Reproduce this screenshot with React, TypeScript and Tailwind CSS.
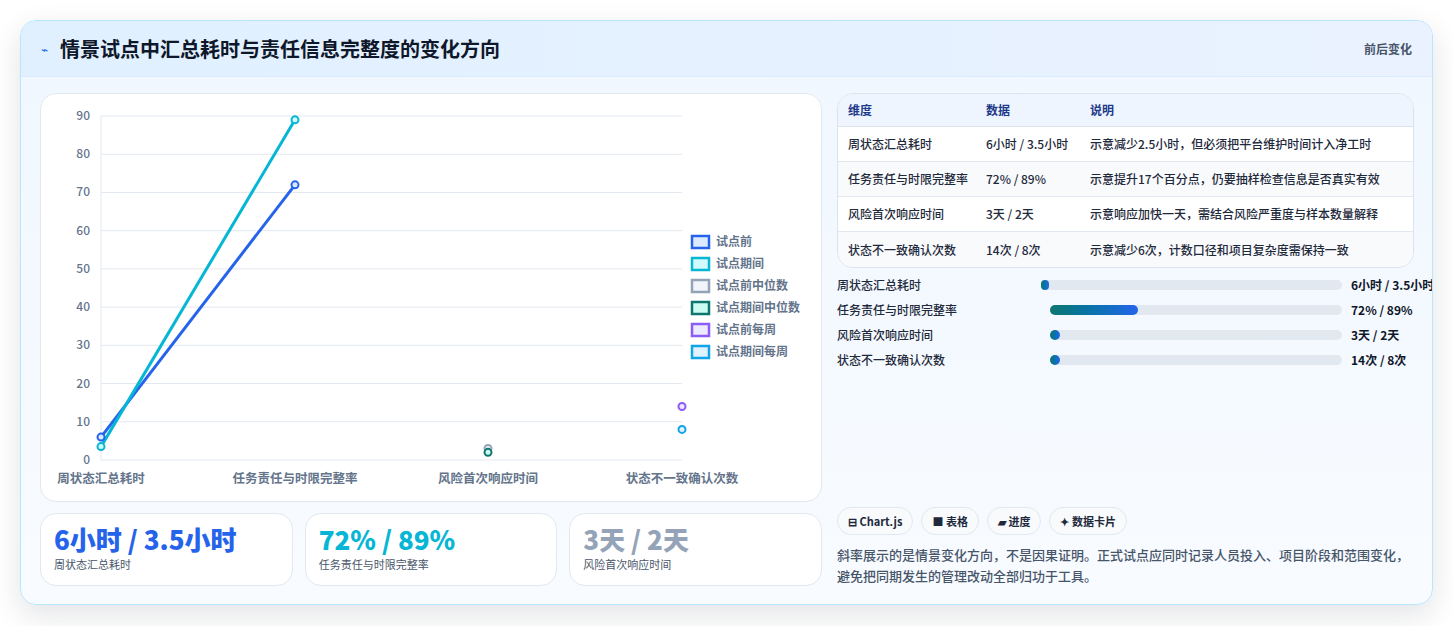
import React from "react";

const font = { fontFamily: '"Noto Sans CJK SC", "Noto Sans", sans-serif' };

const yTicks = [0, 10, 20, 30, 40, 50, 60, 70, 80, 90];
const yOf = (v: number) => 366 - v * 3.822;
const xs = [60, 254, 447, 641];
const cats = ["周状态汇总耗时", "任务责任与时限完整率", "风险首次响应时间", "状态不一致确认次数"];

const legend = [
  { label: "试点前", stroke: "#2563eb", fill: "#dbeafe" },
  { label: "试点期间", stroke: "#06b6d4", fill: "#cffafe" },
  { label: "试点前中位数", stroke: "#94a3b8", fill: "#f1f5f9" },
  { label: "试点期间中位数", stroke: "#0f766e", fill: "#ccfbf1" },
  { label: "试点前每周", stroke: "#8b5cf6", fill: "#ede9fe" },
  { label: "试点期间每周", stroke: "#0ea5e9", fill: "#e0f2fe" },
];

function Chart() {
  return (
    <svg width="781" height="408" viewBox="0 0 781 408" className="block">
      {yTicks.map((t) => (
        <g key={t}>
          <line x1={60} x2={641} y1={yOf(t)} y2={yOf(t)} stroke="#e2e8f0" strokeWidth={1} />
          <text x={49} y={yOf(t) + 4} textAnchor="end" fontSize={12} fill="#64748b" fontWeight={500} style={font}>{t}</text>
        </g>
      ))}
      <line x1={60} x2={60} y1={yOf(90)} y2={366} stroke="#e2e8f0" />
      {cats.map((c, i) => (
        <text key={c} x={xs[i]} y={389} textAnchor="middle" fontSize={12.5} fill="#64748b" fontWeight={600} style={font}>{c}</text>
      ))}
      <line x1={60} y1={yOf(6)} x2={254} y2={yOf(72)} stroke="#2563eb" strokeWidth={3} />
      <line x1={60} y1={yOf(3.5)} x2={254} y2={yOf(89)} stroke="#06b6d4" strokeWidth={3} />
      <circle cx={60} cy={yOf(6)} r={3.5} fill="#dbeafe" stroke="#2563eb" strokeWidth={2} />
      <circle cx={254} cy={yOf(72)} r={3.5} fill="#dbeafe" stroke="#2563eb" strokeWidth={2} />
      <circle cx={60} cy={yOf(3.5)} r={3.5} fill="#cffafe" stroke="#06b6d4" strokeWidth={2} />
      <circle cx={254} cy={yOf(89)} r={3.5} fill="#cffafe" stroke="#06b6d4" strokeWidth={2} />
      <circle cx={447} cy={yOf(3)} r={3.5} fill="#f1f5f9" stroke="#94a3b8" strokeWidth={2} />
      <circle cx={447} cy={yOf(2)} r={3.5} fill="#ccfbf1" stroke="#0f766e" strokeWidth={2} />
      <circle cx={641} cy={yOf(14)} r={3.5} fill="#ede9fe" stroke="#8b5cf6" strokeWidth={2} />
      <circle cx={641} cy={yOf(8)} r={3.5} fill="#e0f2fe" stroke="#0ea5e9" strokeWidth={2} />
      {legend.map((l, i) => (
        <g key={l.label}>
          <rect x={651} y={142 + i * 22} width={17} height={12} fill={l.fill} stroke={l.stroke} strokeWidth={2.5} />
          <text x={675} y={152 + i * 22} fontSize={12} fill="#64748b" fontWeight={600} style={font}>{l.label}</text>
        </g>
      ))}
    </svg>
  );
}

const rows = [
  ["周状态汇总耗时", "6小时 / 3.5小时", "示意减少2.5小时，但必须把平台维护时间计入净工时"],
  ["任务责任与时限完整率", "72% / 89%", "示意提升17个百分点，仍要抽样检查信息是否真实有效"],
  ["风险首次响应时间", "3天 / 2天", "示意响应加快一天，需结合风险严重度与样本数量解释"],
  ["状态不一致确认次数", "14次 / 8次", "示意减少6次，计数口径和项目复杂度需保持一致"],
];

const bars = [
  { label: "周状态汇总耗时", value: "6小时 / 3.5小时", w: "w-[204px]", pct: "w-[8px]" },
  { label: "任务责任与时限完整率", value: "72% / 89%", w: "w-[213px]", pct: "w-[30%]" },
  { label: "风险首次响应时间", value: "3天 / 2天", w: "w-[213px]", pct: "w-[10px]" },
  { label: "状态不一致确认次数", value: "14次 / 8次", w: "w-[213px]", pct: "w-[10px]" },
];

const stats = [
  { value: "6小时 / 3.5小时", label: "周状态汇总耗时", color: "text-[#2563eb]" },
  { value: "72% / 89%", label: "任务责任与时限完整率", color: "text-[#06b6d4]" },
  { value: "3天 / 2天", label: "风险首次响应时间", color: "text-[#94a3b8]" },
];

const chips = ["⊟ Chart.js", "■ 表格", "▰ 进度", "✦ 数据卡片"];

export default function App() {
  return (
    <div className="min-h-screen bg-white p-5" style={font}>
      <div className="rounded-2xl border border-[#bae6fd] bg-gradient-to-b from-[#f0f7ff] to-[#f8fbff] shadow-[0_10px_30px_rgba(15,23,42,0.12)] overflow-hidden">
        <div className="flex h-[56px] items-center justify-between border-b border-[#dbeafe] bg-gradient-to-r from-[#e0f0ff] to-[#eaf2ff] pl-5 pr-5">
          <div className="flex items-center gap-3">
            <span className="text-[12px] text-[#2563eb]">⌁</span>
            <h1 className="text-[20px] font-bold text-[#0f172a]">情景试点中汇总耗时与责任信息完整度的变化方向</h1>
          </div>
          <span className="text-[12px] font-bold text-[#475569]">前后变化</span>
        </div>
        <div className="flex gap-[15px] pl-[19px] pr-[18px] pt-4 pb-[18px]">
          <div className="w-[782px] flex-none">
            <div className="h-[409px] rounded-2xl border border-[#e2e8f0] bg-white">
              <Chart />
            </div>
            <div className="mt-[11px] grid grid-cols-3 gap-3">
              {stats.map((s) => (
                <div key={s.label} className="h-[73px] rounded-2xl border border-[#e2e8f0] bg-white px-[13px] pt-[9px]">
                  <div className={`text-[26px] font-extrabold leading-[32px] ${s.color}`}>{s.value}</div>
                  <div className="mt-[1px] text-[11px] text-[#475569]">{s.label}</div>
                </div>
              ))}
            </div>
          </div>
          <div className="flex-1 min-w-0 flex flex-col">
            <div className="overflow-hidden rounded-2xl border border-[#dbe3ee] bg-white/70 text-[12px]">
              <div className="grid grid-cols-[138px_104px_1fr] h-[33px] items-center border-b border-[#dbe3ee] bg-[#eef5ff] px-[10px] font-bold text-[#1e3a8a]">
                <span>维度</span><span>数据</span><span>说明</span>
              </div>
              {rows.map((r, i) => (
                <div key={r[0]} className={`grid grid-cols-[138px_104px_1fr] h-[35px] items-center px-[10px] text-[#1e293b] font-medium ${i < 3 ? "border-b border-[#e2e8f0]" : ""} ${i % 2 === 1 ? "bg-[#f8fafc]" : "bg-white"}`}>
                  <span>{r[0]}</span><span>{r[1]}</span><span className="whitespace-nowrap">{r[2]}</span>
                </div>
              ))}
            </div>
            <div className="mt-[12px] flex flex-col gap-[15px]">
              {bars.map((b) => (
                <div key={b.label} className="flex h-[10px] items-center text-[12px] font-medium text-[#1e293b]">
                  <span className={`${b.w} flex-none whitespace-nowrap`}>{b.label}</span>
                  <div className="flex-1 h-[10px] rounded-full bg-[#e2e8f0]">
                    <div className={`h-full rounded-full bg-gradient-to-r from-[#0f766e] to-[#2563eb] ${b.pct}`} />
                  </div>
                  <span className="ml-[9px] w-[63px] flex-none font-bold text-[#0f172a] whitespace-nowrap">{b.value}</span>
                </div>
              ))}
            </div>
            <div className="mt-auto flex gap-2">
              {chips.map((c) => (
                <span key={c} className="h-[28px] rounded-full border border-[#e2e8f0] bg-[#f8fafc] px-[10px] text-[11px] font-bold leading-[26px] text-[#1e293b]">{c}</span>
              ))}
            </div>
            <p className="mt-[9px] text-[13px] leading-[21px] font-medium text-[#475569]">
              斜率展示的是情景变化方向，不是因果证明。正式试点应同时记录人员投入、项目阶段和范围变化，避免把同期发生的管理改动全部归功于工具。
            </p>
          </div>
        </div>
      </div>
    </div>
  );
}
